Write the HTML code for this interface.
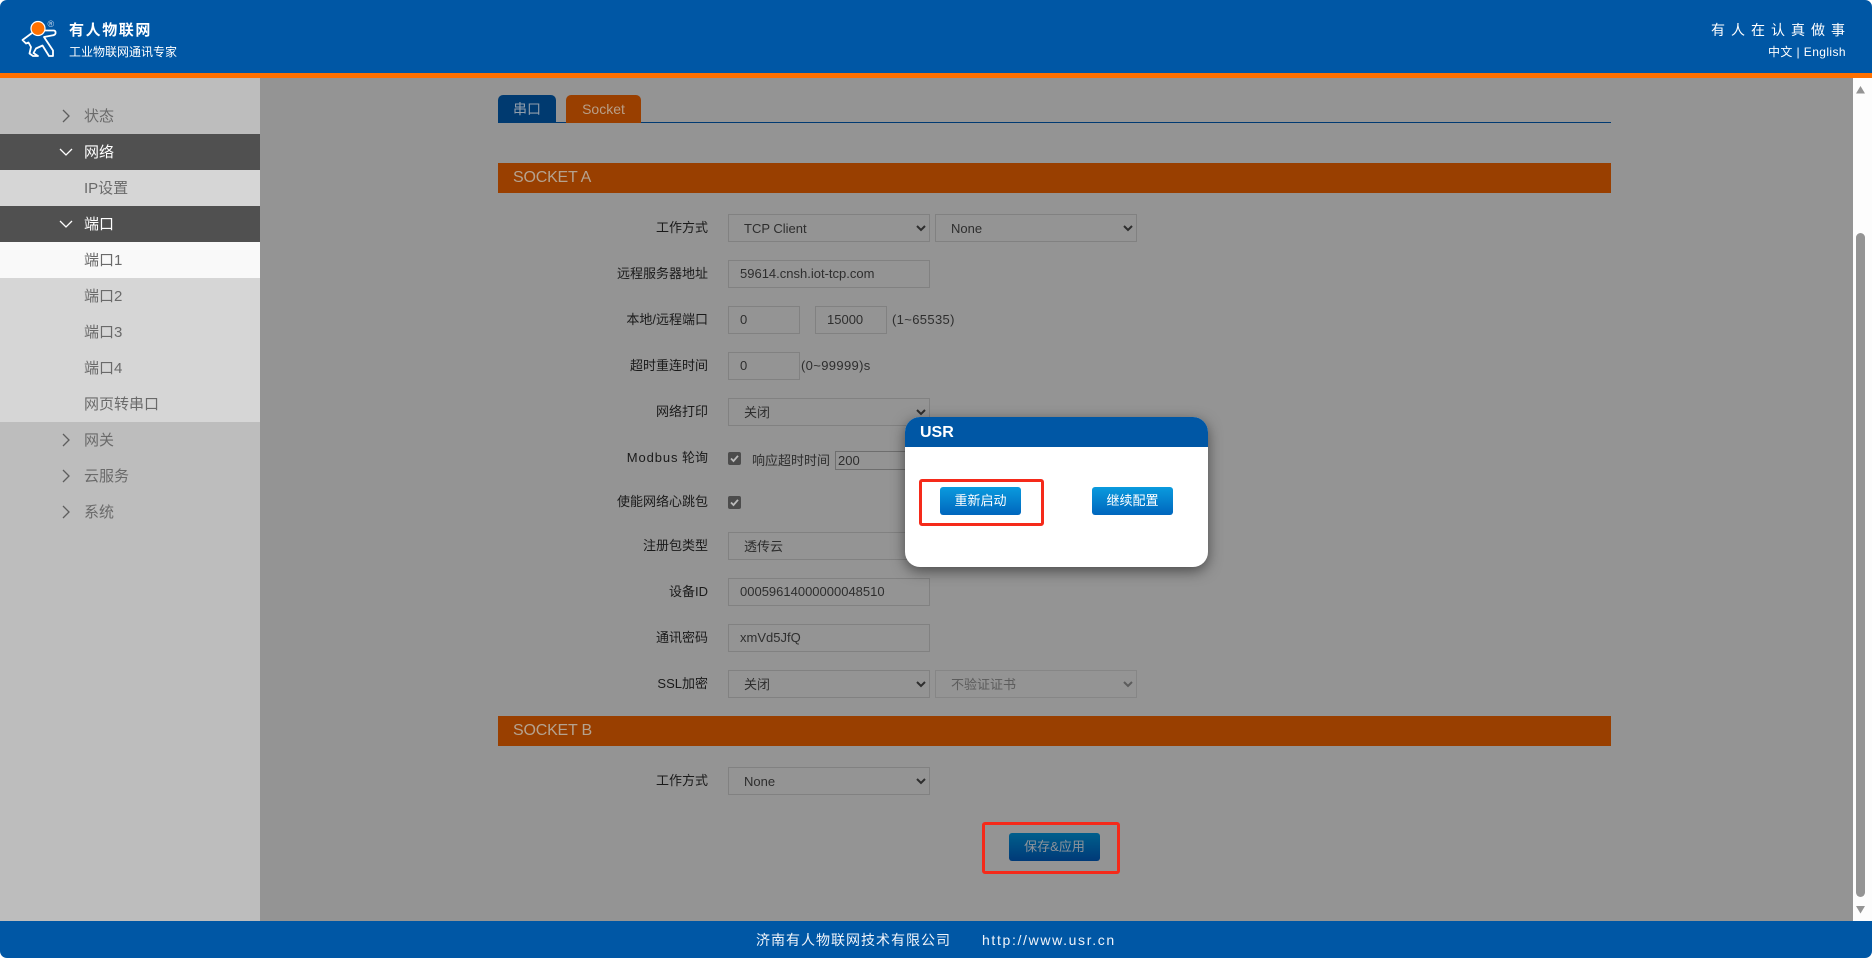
<!DOCTYPE html>
<html lang="zh">
<head>
<meta charset="utf-8">
<title>USR</title>
<style>
html,body{margin:0;padding:0;width:1872px;height:958px;overflow:hidden;background:#fff;font-family:"Liberation Sans","Noto Sans CJK SC",sans-serif}
*{box-sizing:border-box}
.a{position:absolute}
#hdr{left:0;top:0;width:1872px;height:73px;background:#0057a5;border-radius:7px 7px 0 0;color:#fff}
#bar{left:0;top:73px;width:1872px;height:5px;background:#ff7000}
#side{left:0;top:78px;width:260px;height:843px;background:#bdbdbd}
#main{left:260px;top:78px;width:1593px;height:843px;background:#949494}
#sb{left:1853px;top:78px;width:19px;height:843px;background:#fdfdfd}
#ft{left:0;top:921px;width:1872px;height:37px;background:#0057a5;border-radius:0 0 7px 7px;color:#f0f4fa;font-size:14px}
.m{position:absolute;left:0;width:260px;height:36px;line-height:37px;padding-left:84px;font-size:15px;color:#6a6a6a}
.m svg{position:absolute;left:58px;top:10px}
.d{background:#505050;color:#fff}
.s{background:#d6d6d6}
.on{background:#f9f9f9}
.lb{position:absolute;left:480px;width:228px;text-align:right;font-size:13px;line-height:20px;color:#1a1a1a;white-space:nowrap}
.in,select{position:absolute;height:28px;border:1px solid #818181;background:transparent;color:#2e2e2e;font:13px "Liberation Sans","Noto Sans CJK SC",sans-serif;border-radius:0;margin:0;outline:0}
.in{padding:0 0 2px 11px}
select{padding-left:11px;width:202px;left:728px}
.t{position:absolute;font-size:13px;color:#2e2e2e;line-height:20px;white-space:nowrap;letter-spacing:.35px}
.sec{position:absolute;left:498px;width:1113px;height:30px;line-height:30px;background:#993f00;color:#b5a28f;font-size:16px;padding-left:15px;letter-spacing:-.2px}
.ck{position:absolute;left:728px;width:13px;height:13px;background:#4c4c4c;border-radius:2px}
.btn{position:absolute;height:28px;border-radius:3px;color:#fff;text-align:center;line-height:28px;font-size:13px;background:linear-gradient(#0a9bde,#0066bd)}
.red{position:absolute;border:3px solid #f52a1a;border-radius:3px}
</style>
</head>
<body>
<div id="hdr" class="a">
  <svg class="a" style="left:20px;top:18px" width="40" height="42" viewBox="20 18 40 42">
    <path d="M45 30.500L54 30.500Q56 31 55.500 33.500Q55 35 53 35.300L44 37L53 50.500V56H49L42.500 45.500L36 48.500L33.500 53L38 56H33L29.500 53.500L31 47L28.500 42.500L26 43.500L22.500 40L32 33" fill="none" stroke="#fff" stroke-width="1.800" stroke-linejoin="round" stroke-linecap="round"/>
    <circle cx="38" cy="28.500" r="7" fill="#ff7000" stroke="#fff" stroke-width="1.200"/>
    <text x="47.500" y="27" font-size="9" fill="#c4d6ea" font-family="Liberation Sans">®</text>
  </svg>
  <div class="a" style="left:69px;top:21px;font-size:15px;font-weight:bold;letter-spacing:1.600px;line-height:20px;white-space:nowrap">有人物联网</div>
  <div class="a" style="left:69px;top:43px;font-size:12px;line-height:18px;white-space:nowrap">工业物联网通讯专家</div>
  <div class="a" style="left:1711px;top:20px;font-size:14px;letter-spacing:6px;line-height:20px;white-space:nowrap">有人在认真做事</div>
  <div class="a" style="left:1768px;top:43px;font-size:12px;line-height:18px;white-space:nowrap;letter-spacing:.4px">中文 | English</div>
</div>
<div id="bar" class="a"></div>

<div id="side" class="a">
  <div class="m" style="top:20px"><svg width="16" height="16" viewBox="0 0 16 16"><path d="M5 2L11 8L5 14" fill="none" stroke="#5e5e5e" stroke-width="1.300"/></svg>状态</div>
  <div class="m d" style="top:56px"><svg width="16" height="16" viewBox="0 0 16 16"><path d="M2 5L8 11L14 5" fill="none" stroke="#fff" stroke-width="1.300"/></svg>网络</div>
  <div class="m s" style="top:92px">IP设置</div>
  <div class="m d" style="top:128px"><svg width="16" height="16" viewBox="0 0 16 16"><path d="M2 5L8 11L14 5" fill="none" stroke="#fff" stroke-width="1.300"/></svg>端口</div>
  <div class="m on" style="top:164px">端口1</div>
  <div class="m s" style="top:200px">端口2</div>
  <div class="m s" style="top:236px">端口3</div>
  <div class="m s" style="top:272px">端口4</div>
  <div class="m s" style="top:308px">网页转串口</div>
  <div class="m" style="top:344px"><svg width="16" height="16" viewBox="0 0 16 16"><path d="M5 2L11 8L5 14" fill="none" stroke="#5e5e5e" stroke-width="1.300"/></svg>网关</div>
  <div class="m" style="top:380px"><svg width="16" height="16" viewBox="0 0 16 16"><path d="M5 2L11 8L5 14" fill="none" stroke="#5e5e5e" stroke-width="1.300"/></svg>云服务</div>
  <div class="m" style="top:416px"><svg width="16" height="16" viewBox="0 0 16 16"><path d="M5 2L11 8L5 14" fill="none" stroke="#5e5e5e" stroke-width="1.300"/></svg>系统</div>
</div>

<div id="main" class="a"></div>

<div id="sb" class="a">
  <svg class="a" style="left:3px;top:8px" width="9" height="8" viewBox="0 0 9 8"><path d="M4.500 0L9 7.500H0Z" fill="#949494"/></svg>
  <div class="a" style="left:3px;top:155px;width:9px;height:664px;background:#949494;border-radius:4.500px"></div>
  <svg class="a" style="left:3px;top:828px" width="9" height="8" viewBox="0 0 9 8"><path d="M0 0H9L4.500 7.500Z" fill="#949494"/></svg>
</div>

<!-- tabs -->
<div class="a" style="left:498px;top:122px;width:1113px;height:1px;background:#003a72"></div>
<div class="a" style="left:498px;top:95px;width:58px;height:28px;background:#003a70;border-radius:5px 5px 0 0;color:#929eab;font-size:14px;line-height:29px;text-align:center">串口</div>
<div class="a" style="left:566px;top:95px;width:75px;height:28px;background:#993f00;border-radius:5px 5px 0 0;color:#b89f88;font-size:14px;line-height:29px;text-align:center">Socket</div>

<div class="sec" style="top:163px">SOCKET A</div>

<div class="lb" style="top:218px">工作方式</div>
<select style="top:214px"><option>TCP Client</option></select>
<select style="top:214px;left:935px"><option>None</option></select>

<div class="lb" style="top:264px">远程服务器地址</div>
<input class="in" style="left:728px;top:260px;width:202px" value="59614.cnsh.iot-tcp.com">

<div class="lb" style="top:310px">本地/远程端口</div>
<input class="in" style="left:728px;top:306px;width:72px" value="0">
<input class="in" style="left:815px;top:306px;width:72px" value="15000">
<div class="t" style="left:892px;top:310px">(1~65535)</div>

<div class="lb" style="top:356px">超时重连时间</div>
<input class="in" style="left:728px;top:352px;width:72px" value="0">
<div class="t" style="left:801px;top:356px">(0~99999)s</div>

<div class="lb" style="top:402px">网络打印</div>
<select style="top:398px"><option>关闭</option></select>

<div class="lb" style="top:448px"><span style="letter-spacing:.9px">Modbus</span> 轮询</div>
<div class="ck" style="top:452px"><svg width="13" height="13" viewBox="0 0 13 13" style="display:block"><path d="M3 6.500L5.500 9L10 3.800" fill="none" stroke="#bbb" stroke-width="1.800"/></svg></div>
<div class="t" style="left:752px;top:451px;letter-spacing:0">响应超时时间</div>
<input class="in" style="left:835px;top:451px;width:95px;height:19px;padding:0 0 0 2px;border-color:#6e6e6e" value="200">

<div class="lb" style="top:492px">使能网络心跳包</div>
<div class="ck" style="top:496px"><svg width="13" height="13" viewBox="0 0 13 13" style="display:block"><path d="M3 6.500L5.500 9L10 3.800" fill="none" stroke="#bbb" stroke-width="1.800"/></svg></div>

<div class="lb" style="top:536px">注册包类型</div>
<select style="top:532px"><option>透传云</option></select>

<div class="lb" style="top:582px">设备ID</div>
<input class="in" style="left:728px;top:578px;width:202px" value="00059614000000048510">

<div class="lb" style="top:628px">通讯密码</div>
<input class="in" style="left:728px;top:624px;width:202px" value="xmVd5JfQ">

<div class="lb" style="top:674px">SSL加密</div>
<select style="top:670px"><option>关闭</option></select>
<select style="top:670px;left:935px;color:#5c5c5c;border-color:#868686;opacity:1" disabled><option>不验证证书</option></select>

<div class="sec" style="top:716px">SOCKET B</div>

<div class="lb" style="top:771px">工作方式</div>
<select style="top:767px"><option>None</option></select>

<div class="btn" style="left:1009px;top:833px;width:91px;background:linear-gradient(#005f8c,#003a78);color:#8e949a">保存&amp;应用</div>
<div class="red" style="left:982px;top:822px;width:138px;height:52px"></div>

<!-- modal -->
<div class="a" style="left:905px;top:417px;width:303px;height:150px;background:#fff;border-radius:15px;box-shadow:0 4px 14px rgba(0,0,0,.5);overflow:hidden">
  <div class="a" style="left:0;top:0;width:303px;height:30px;background:#0057a5;color:#fff;font-size:16px;font-weight:bold;line-height:32px;padding-left:15px">USR</div>
</div>
<div class="btn" style="left:940px;top:487px;width:81px">重新启动</div>
<div class="btn" style="left:1092px;top:487px;width:81px">继续配置</div>
<div class="red" style="left:919px;top:479px;width:125px;height:47px"></div>

<div id="ft" class="a">
  <div class="a" style="left:756px;top:0;line-height:38px;letter-spacing:1px;white-space:nowrap">济南有人物联网技术有限公司</div>
  <div class="a" style="left:982px;top:0;line-height:38px;letter-spacing:1.650px;white-space:nowrap">http://www.usr.cn</div>
</div>
</body>
</html>
